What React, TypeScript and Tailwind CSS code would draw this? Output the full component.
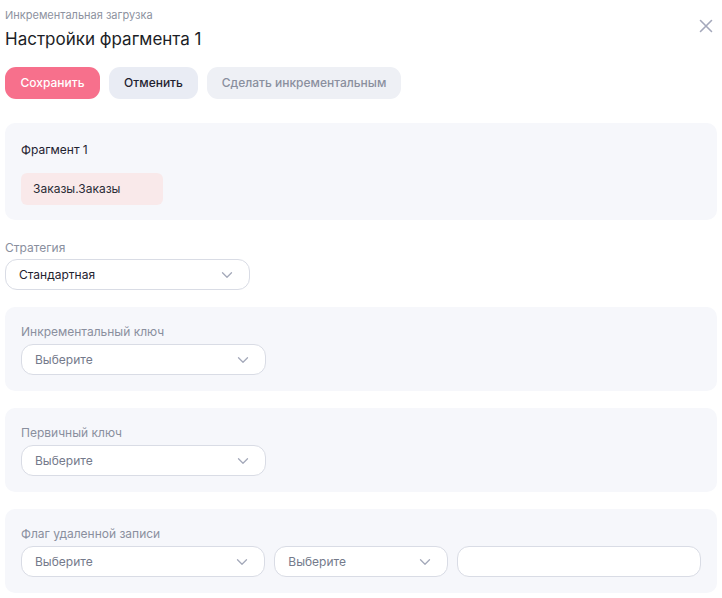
import React from "react";

function Chevron() {
  return (
    <svg width="12" height="8" viewBox="0 0 12 8" fill="none" className="shrink-0">
      <path d="M1.5 1.75L6 6.25L10.5 1.75" stroke="#a4a9ba" strokeWidth="1.3" strokeLinecap="round" strokeLinejoin="round" />
    </svg>
  );
}

function Select({ value, placeholder, width }: { value?: string; placeholder?: string; width: string }) {
  return (
    <div className={`${width} h-[31px] flex items-center justify-between rounded-[12px] border border-[#d9dce5] bg-white pl-[13px] pr-[16px]`}>
      <span className={`text-[12px] ${value ? "text-[#1f2230]" : "text-[#747a8b]"}`}>{value ?? placeholder}</span>
      <Chevron />
    </div>
  );
}

function Panel({ label, children }: { label: string; children: React.ReactNode }) {
  return (
    <div className="h-[84px] rounded-[10px] bg-[#f6f7fb] px-4 pt-[17px]">
      <div className="text-[12px] leading-[16px] text-[#8a8f9e] mb-[4px]">{label}</div>
      {children}
    </div>
  );
}

export default function App() {
  return (
    <div className="w-[722px] h-[598px] bg-white px-[5px] pt-[8px] relative" style={{ fontFamily: "Inter, 'Noto Sans', sans-serif" }}>
      <button className="absolute right-[9px] top-[19px] text-[#a4a8bb]">
        <svg width="14" height="14" viewBox="0 0 14 14" fill="none">
          <path d="M1.5 1.5L12.5 12.5M12.5 1.5L1.5 12.5" stroke="#a4a8bb" strokeWidth="1.6" strokeLinecap="round" />
        </svg>
      </button>

      <div className="text-[11px] leading-[14px] text-[#8d92a0]">Инкрементальная загрузка</div>
      <div className="mt-[6px] text-[17px] leading-[22px] text-[#1c1e26]">Настройки фрагмента 1</div>

      <div className="mt-[17px] flex gap-[9px]">
        <button className="h-[32px] w-[95px] rounded-[11px] bg-[#f7708c] text-[12px] font-medium text-white">Сохранить</button>
        <button className="h-[32px] w-[89px] rounded-[11px] bg-[#e9ecf4] text-[12px] font-medium text-[#1f2230]">Отменить</button>
        <button className="h-[32px] w-[194px] rounded-[11px] bg-[#eef0f5] text-[12px] font-medium text-[#8a8f9e]">Сделать инкрементальным</button>
      </div>

      <div className="mt-[24px] h-[97px] rounded-[10px] bg-[#f6f7fb] px-4 pt-[17px]">
        <div className="text-[12px] leading-[20px] text-[#1f2230]">Фрагмент 1</div>
        <div className="mt-[13px] flex h-[32px] w-[142px] items-center rounded-[6px] bg-[#f9e9ea] pl-[12px] text-[12px] text-[#2a2c36]">
          Заказы.Заказы
        </div>
      </div>

      <div className="mt-[20px] text-[12px] leading-[16px] text-[#8a8f9e] mb-[3px]">Стратегия</div>
      <Select value="Стандартная" width="w-[245px]" />

      <div className="mt-[17px] flex flex-col gap-[17px]">
        <Panel label="Инкрементальный ключ">
          <Select placeholder="Выберите" width="w-[245px]" />
        </Panel>
        <Panel label="Первичный ключ">
          <Select placeholder="Выберите" width="w-[245px]" />
        </Panel>
        <Panel label="Флаг удаленной записи">
          <div className="flex gap-[9px]">
            <Select placeholder="Выберите" width="w-[245px]" />
            <Select placeholder="Выберите" width="w-[174px]" />
            <div className="h-[31px] w-[245px] rounded-[12px] border border-[#d9dce5] bg-white" />
          </div>
        </Panel>
      </div>
    </div>
  );
}
